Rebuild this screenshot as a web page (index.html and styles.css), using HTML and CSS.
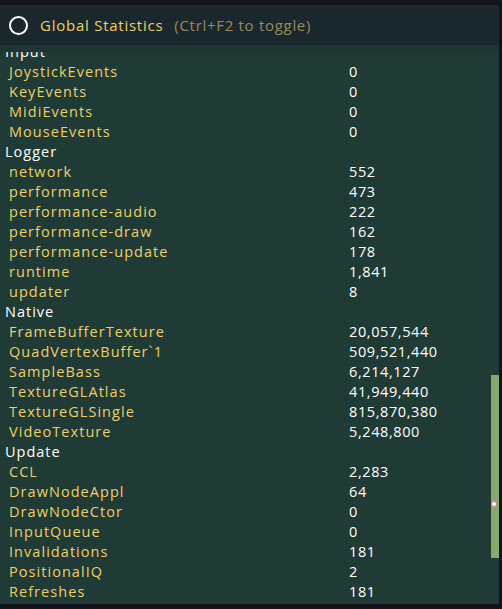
FILE: index.html
```html
<!DOCTYPE html>
<html>
<head>
<meta charset="utf-8">
<link rel="stylesheet" href="styles.css">
</head>
<body>
<div class="panel">
  <div class="header">
    <span class="toggle"></span>
    <span class="title">Global Statistics</span>
    <span class="hint">(Ctrl+F2 to toggle)</span>
  </div>
  <div class="band"></div>
  <div class="content">
    <div class="list">
      <div class="group">Input</div>
      <div class="row"><span class="key">JoystickEvents</span><span class="val">0</span></div>
      <div class="row"><span class="key">KeyEvents</span><span class="val">0</span></div>
      <div class="row"><span class="key">MidiEvents</span><span class="val">0</span></div>
      <div class="row"><span class="key">MouseEvents</span><span class="val">0</span></div>
      <div class="group">Logger</div>
      <div class="row"><span class="key">network</span><span class="val">552</span></div>
      <div class="row"><span class="key">performance</span><span class="val">473</span></div>
      <div class="row"><span class="key">performance-audio</span><span class="val">222</span></div>
      <div class="row"><span class="key">performance-draw</span><span class="val">162</span></div>
      <div class="row"><span class="key">performance-update</span><span class="val">178</span></div>
      <div class="row"><span class="key">runtime</span><span class="val">1,841</span></div>
      <div class="row"><span class="key">updater</span><span class="val">8</span></div>
      <div class="group">Native</div>
      <div class="row"><span class="key">FrameBufferTexture</span><span class="val">20,057,544</span></div>
      <div class="row"><span class="key">QuadVertexBuffer`1</span><span class="val">509,521,440</span></div>
      <div class="row"><span class="key">SampleBass</span><span class="val">6,214,127</span></div>
      <div class="row"><span class="key">TextureGLAtlas</span><span class="val">41,949,440</span></div>
      <div class="row"><span class="key">TextureGLSingle</span><span class="val">815,870,380</span></div>
      <div class="row"><span class="key">VideoTexture</span><span class="val">5,248,800</span></div>
      <div class="group">Update</div>
      <div class="row"><span class="key">CCL</span><span class="val">2,283</span></div>
      <div class="row"><span class="key">DrawNodeAppl</span><span class="val">64</span></div>
      <div class="row"><span class="key">DrawNodeCtor</span><span class="val">0</span></div>
      <div class="row"><span class="key">InputQueue</span><span class="val">0</span></div>
      <div class="row"><span class="key">Invalidations</span><span class="val">181</span></div>
      <div class="row"><span class="key">PositionalIQ</span><span class="val">2</span></div>
      <div class="row"><span class="key">Refreshes</span><span class="val">181</span></div>
    </div>
    <div class="scrollbar"></div>
    <div class="cursor"></div>
  </div>
</div>
</body>
</html>
```
FILE: styles.css
```css
html, body {
  margin: 0;
  padding: 0;
}
body {
  background: #12131b;
  width: 502px;
  height: 609px;
  overflow: hidden;
  padding-top: 5px;
  box-sizing: border-box;
  font-family: "Open Sans", "Noto Sans", sans-serif;
}
.panel {
  width: 499px;
  height: 599px;
  display: flex;
  flex-direction: column;
}
.header {
  height: 40px;
  flex: none;
  background: #1a282d;
  display: flex;
  align-items: center;
  padding-left: 9px;
  box-sizing: border-box;
}
.toggle {
  width: 15px;
  height: 15px;
  border: 2px solid #ffffff;
  border-radius: 50%;
  flex: none;
}
.title {
  margin-left: 12px;
  color: #ecd06a;
  font-size: 15px;
  letter-spacing: 0.75px;
}
.hint {
  margin-left: 11px;
  color: #958b5e;
  font-size: 15px;
  letter-spacing: 0.7px;
}
.band {
  height: 7px;
  flex: none;
  background: #1f3437;
}
.content {
  flex: 1;
  position: relative;
  overflow: hidden;
  background: #203a36;
}
.list {
  margin-top: -10px;
}
.group, .row {
  height: 20px;
  line-height: 20px;
  font-size: 14.5px;
  white-space: nowrap;
}
.group {
  color: #ffffff;
  padding-left: 5px;
  letter-spacing: 1px;
}
.row {
  display: grid;
  grid-template-columns: 340px 1fr;
  padding-left: 9px;
}
.key {
  color: #ecd06a;
  letter-spacing: 1.05px;
}
.val {
  color: #ffffff;
  letter-spacing: 0.6px;
}
.scrollbar {
  position: absolute;
  right: 0;
  top: 323px;
  width: 8px;
  height: 183px;
  background: #88a86c;
}
.cursor {
  position: absolute;
  left: 491px;
  top: 449px;
  width: 4px;
  height: 4px;
  border: 1.5px solid #f06aa8;
  background: #ffffff;
  border-radius: 50%;
}
```
